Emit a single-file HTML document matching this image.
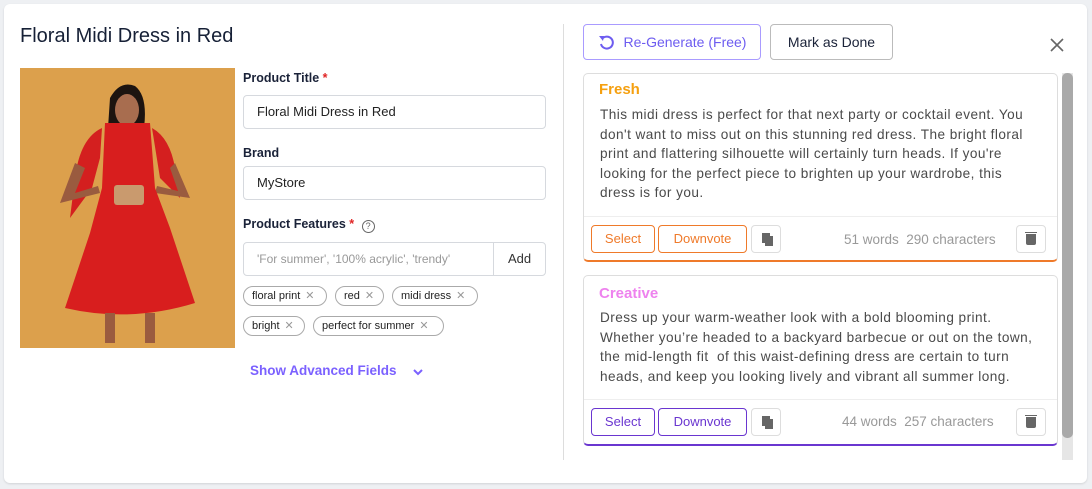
<!DOCTYPE html><html><head><style>
body{margin:0;width:1092px;height:489px;background:#eef0f3;font-family:"Liberation Sans",sans-serif;position:relative;overflow:hidden}
.a{position:absolute}
.card{left:4px;top:4px;width:1083px;height:479px;background:#fff;border-radius:6px;box-shadow:0 1px 2px rgba(0,0,0,.12)}
.lbl{font-weight:bold;font-size:12.5px;color:#1a2238}
.req{color:#e02424}
.inp{border:1px solid #d6d9de;border-radius:4px;background:#fff;box-sizing:border-box;font-size:13px;color:#222;padding-left:13px;line-height:32px}
.chip{border:1px solid #aaa;border-radius:12px;height:20px;box-sizing:border-box;font-size:11px;color:#222;line-height:18px;padding-left:8px}
.chip span{color:#999;margin-left:5px}
.btn{border-radius:4px;box-sizing:border-box;text-align:center;font-size:13px}
.txt{font-size:13.6px;color:#4a4a4a;line-height:19.6px;letter-spacing:.45px;white-space:nowrap}
.ib{border:1px solid #ddd;border-radius:4px;width:30px;height:28px;box-sizing:border-box}
</style></head><body>
<div class="a card"></div>
<div class="a" style="left:20px;top:25px;font-size:20px;color:#162036">Floral Midi Dress in Red</div>
<svg class="a" style="left:20px;top:68px" width="215" height="280" viewBox="0 0 215 280">
<rect width="215" height="280" fill="#dca04c"/>
<path d="M90 30 Q100 12 115 18 Q128 28 124 60 L130 110 L85 110 L88 60Z" fill="#1d1410"/>
<ellipse cx="107" cy="42" rx="12" ry="16" fill="#a86d4f"/>
<path d="M82 60 Q60 70 55 110 L50 150 L72 120 L80 90Z" fill="#d41f1f"/>
<path d="M132 60 Q150 70 155 100 L160 130 L140 110Z" fill="#d41f1f"/>
<path d="M55 95 L40 135 L80 125 L78 118 L55 125 L65 100Z" fill="#9a5b3f"/>
<path d="M155 95 L170 130 L135 125 L137 118 L158 123 L150 100Z" fill="#9a5b3f"/>
<path d="M85 55 L130 55 L135 120 L150 160 L175 235 Q110 255 45 240 L70 165 L82 120Z" fill="#d81e1e"/>
<rect x="94" y="117" width="30" height="20" rx="3" fill="#c99a6e"/>
<path d="M85 245 L85 275 L95 275 L95 245Z M125 245 L125 275 L135 275 L135 245Z" fill="#9a5b3f"/>
</svg>
<div class="a lbl" style="left:243px;top:71px">Product Title <span class="req">*</span></div>
<div class="a inp" style="left:243px;top:95px;width:303px;height:34px">Floral Midi Dress in Red</div>
<div class="a lbl" style="left:243px;top:146px">Brand</div>
<div class="a inp" style="left:243px;top:166px;width:303px;height:34px">MyStore</div>
<div class="a lbl" style="left:243px;top:217px">Product Features <span class="req">*</span> <span style="display:inline-block;width:11px;height:11px;border:1px solid #666;border-radius:50%;font-size:9px;line-height:11px;text-align:center;color:#666;font-weight:normal;margin-left:4px;vertical-align:-1px">?</span></div>
<div class="a inp" style="left:243px;top:242px;width:303px;height:34px;color:#999;font-size:12px">'For summer', '100% acrylic', 'trendy'</div>
<div class="a" style="left:493px;top:243px;width:1px;height:32px;background:#d6d9de"></div>
<div class="a" style="left:508px;top:251px;font-size:13px;color:#333">Add</div>
<div class="a chip" style="left:243px;top:286px;width:84px">floral print<span>✕</span></div>
<div class="a chip" style="left:335px;top:286px;width:49px">red<span>✕</span></div>
<div class="a chip" style="left:392px;top:286px;width:86px">midi dress<span>✕</span></div>
<div class="a chip" style="left:243px;top:316px;width:62px">bright<span>✕</span></div>
<div class="a chip" style="left:313px;top:316px;width:131px">perfect for summer<span>✕</span></div>
<div class="a" style="left:250px;top:363px;font-size:13.5px;font-weight:bold;color:#7b61ff">Show Advanced Fields</div>
<svg class="a" style="left:412px;top:367px" width="12" height="10"><path d="M2 3 L6 7 L10 3" stroke="#7b61ff" stroke-width="2" fill="none"/></svg>
<div class="a" style="left:563px;top:24px;width:1px;height:436px;background:#ddd"></div>
<div class="a btn" style="left:583px;top:24px;width:178px;height:36px;border:1px solid #a99bff;color:#6d5cf0;line-height:34px;font-size:14px"><svg style="vertical-align:-3px;margin-right:10px" width="16" height="16" viewBox="0 0 16 16"><path d="M4 5 A6 6 0 1 1 3 10" stroke="#6d5cf0" stroke-width="2" fill="none"/><path d="M1 2 L6 2 L5 7Z" fill="#6d5cf0"/></svg>Re-Generate (Free)</div>
<div class="a btn" style="left:770px;top:24px;width:123px;height:36px;border:1px solid #bbb;color:#1a2238;line-height:34px;font-size:14px">Mark as Done</div>
<svg class="a" style="left:1050px;top:38px" width="14" height="14"><path d="M1 1 L13 13 M13 1 L1 13" stroke="#666" stroke-width="1.6"/></svg>
<div class="a" style="left:1062px;top:73px;width:11px;height:387px;background:#e6e6e6"></div>
<div class="a" style="left:1062px;top:73px;width:11px;height:365px;background:#a9a9a9;border-radius:5px"></div>
<div class="a" style="left:583px;top:73px;width:475px;height:189px;border:1px solid #ddd;border-bottom:2px solid #ef7a2a;border-radius:5px;box-sizing:border-box"></div>
<div class="a" style="left:599px;top:81px;font-size:15px;font-weight:bold;color:#f5a010">Fresh</div>
<div class="a txt" style="left:600px;top:105px">This midi dress is perfect for that next party or cocktail event. You<br>don't want to miss out on this stunning red dress. The bright floral<br>print and flattering silhouette will certainly turn heads. If you're<br>looking for the perfect piece to brighten up your wardrobe, this<br>dress is for you.</div>
<div class="a" style="left:584px;top:216px;width:473px;height:1px;background:#eee"></div>
<div class="a btn" style="left:591px;top:225px;width:64px;height:28px;border:1px solid #ef7a2a;color:#ef7a2a;line-height:26px">Select</div>
<div class="a btn" style="left:658px;top:225px;width:89px;height:28px;border:1px solid #ef7a2a;color:#ef7a2a;line-height:26px">Downvote</div>
<div class="a ib" style="left:751px;top:225px"><div class="a" style="left:10px;top:7px;width:8px;height:10px;background:#666;box-shadow:3px 3px 0 #666"></div></div>
<div class="a" style="left:844px;top:232px;font-size:13.5px;color:#999">51 words&nbsp; 290 characters</div>
<div class="a ib" style="left:1016px;top:225px"><div class="a" style="left:9px;top:8px;width:10px;height:11px;background:#666;border-radius:0 0 2px 2px"></div><div class="a" style="left:8px;top:6px;width:12px;height:1px;background:#666"></div></div>
<div class="a" style="left:583px;top:275px;width:475px;height:171px;border:1px solid #ddd;border-bottom:2px solid #6a36d0;border-radius:5px;box-sizing:border-box"></div>
<div class="a" style="left:599px;top:285px;font-size:15px;font-weight:bold;color:#ee82ee">Creative</div>
<div class="a txt" style="left:600px;top:308px">Dress up your warm-weather look with a bold blooming print.<br>Whether you’re headed to a backyard barbecue or out on the town,<br>the mid-length fit&nbsp; of this waist-defining dress are certain to turn<br>heads, and keep you looking lively and vibrant all summer long.</div>
<div class="a" style="left:584px;top:399px;width:473px;height:1px;background:#eee"></div>
<div class="a btn" style="left:591px;top:408px;width:64px;height:28px;border:1px solid #6a36d0;color:#6a36d0;line-height:26px">Select</div>
<div class="a btn" style="left:658px;top:408px;width:89px;height:28px;border:1px solid #6a36d0;color:#6a36d0;line-height:26px">Downvote</div>
<div class="a ib" style="left:751px;top:408px"><div class="a" style="left:10px;top:7px;width:8px;height:10px;background:#666;box-shadow:3px 3px 0 #666"></div></div>
<div class="a" style="left:842px;top:414px;font-size:13.5px;color:#999">44 words&nbsp; 257 characters</div>
<div class="a ib" style="left:1016px;top:408px"><div class="a" style="left:9px;top:8px;width:10px;height:11px;background:#666;border-radius:0 0 2px 2px"></div><div class="a" style="left:8px;top:6px;width:12px;height:1px;background:#666"></div></div>
</body></html>
